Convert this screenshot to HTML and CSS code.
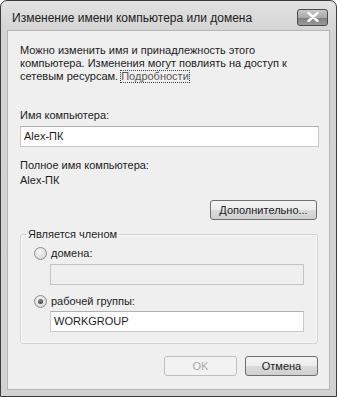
FILE: index.html
```html
<!DOCTYPE html>
<html lang="ru">
<head>
    <meta charset="UTF-8">
    <title>Изменение имени компьютера или домена</title>
    <link rel="stylesheet" href="styles.css">
</head>
<body>
    <div class="window">
        <div class="titlebar">
            <span class="title">Изменение имени компьютера или домена</span>
            <span class="close">
                <svg width="12" height="10" viewBox="0 0 12 10">
                    <path d="M1.5 1 L10.5 9 M10.5 1 L1.5 9" stroke="#fff" stroke-width="2.4" stroke-linecap="round"/>
                </svg>
            </span>
        </div>

        <div class="client">
            <p class="intro">Можно изменить имя и принадлежность этого компьютера. Изменения могут повлиять на доступ к сетевым ресурсам. <span class="link">Подробности</span></p>

            <div class="label first">Имя компьютера:</div>
            <div class="field">Alex-ПК</div>

            <div class="label">Полное имя компьютера:</div>
            <div class="value">Alex-ПК</div>

            <div class="more-row">
                <span class="button wide">Дополнительно...</span>
            </div>

            <fieldset class="group">
                <legend>Является членом</legend>
                <div class="option">
                    <span class="radio"></span> домена:
                </div>
                <div class="field disabled"></div>
                <div class="option">
                    <span class="radio checked"></span> рабочей группы:
                </div>
                <div class="field">WORKGROUP</div>
            </fieldset>

            <div class="actions">
                <span class="button off">OK</span>
                <span class="button">Отмена</span>
            </div>
        </div>
    </div>
</body>
</html>
```

FILE: styles.css
```css
body {
    margin: 0;
    background: #ffffff;
    font-family: 'Liberation Sans', Arial, sans-serif;
    font-size: 11px;
    color: #1c1c1c;
}

.window {
    width: 337px;
    height: 397px;
    box-sizing: border-box;
    border: 1px solid #3c3c3c;
    border-radius: 7px 7px 0 0;
    background: linear-gradient(#e2e2e2, #d4d4d4 30px, #d2d2d2);
    display: flex;
    flex-direction: column;
}

.titlebar {
    height: 29px;
    display: flex;
    align-items: center;
    padding: 0 8px 0 11px;
}

.title {
    flex: 1;
    font-size: 12px;
    color: #202020;
    padding-top: 4px;
}

.close {
    width: 31px;
    height: 17px;
    box-sizing: border-box;
    margin-top: 3px;
    border: 1px solid #4a4a4a;
    border-radius: 3px;
    background: linear-gradient(#c9c9c9, #a9a9a9 50%, #7e7e7e 51%, #9a9a9a);
    display: flex;
    align-items: center;
    justify-content: center;
}

.client {
    flex: 1;
    margin: 0 6px 6px;
    border: 1px solid #b5b5b5;
    background: #efefef;
    padding: 13px 10px 0 12px;
    line-height: 13px;
}

.intro {
    margin: 0;
}

/* focused link: dotted focus rectangle */
.link {
    display: inline-block;
    line-height: 11px;
    color: #5a5a5a;
    outline: 1px dotted #444;
}

.label {
    margin-top: 12px;
}

.label.first {
    margin-top: 26px;
}

.field {
    height: 21px;
    box-sizing: border-box;
    margin-top: 4px;
    padding: 3px 0 0 3px;
    border: 1px solid #c9c9c9;
    border-top-color: #b0b0b0;
    background: #ffffff;
}

.field.disabled {
    background: #efefef;
    border-color: #c4c4c4;
}

.value {
    margin-top: 2px;
}

.more-row {
    display: flex;
    justify-content: flex-end;
    margin-top: 13px;
    padding-right: 2px;
}

.button {
    width: 73px;
    height: 20px;
    box-sizing: border-box;
    display: flex;
    align-items: center;
    justify-content: center;
    border: 1px solid #6e6e6e;
    border-radius: 3px;
    background: linear-gradient(#f4f4f4, #ebebeb 50%, #dcdcdc 51%, #cfcfcf);
}

.button.wide {
    width: 107px;
}

.button.off {
    color: #a8a8a8;
    border-color: #bfbfbf;
    background: #f2f2f2;
}

.group {
    margin: 8px 1px 0 0;
    padding: 4px 13px 11px 13px;
    border: 1px solid #d2d2d2;
    border-radius: 3px;
    box-shadow: inset 0 0 0 1px #fafafa;
}

.group legend {
    padding: 0 2px;
    margin-left: -8px;
}

.option {
    display: flex;
    align-items: center;
    gap: 4px;
    margin-top: 2px;
}

.group .option + .field {
    margin-top: 4px;
    margin-left: 16px;
}

.group .field + .option {
    margin-top: 10px;
}

.group .field:last-child {
    margin-top: 3px;
}

.radio {
    width: 13px;
    height: 13px;
    box-sizing: border-box;
    border-radius: 50%;
    border: 1px solid #8c8c8c;
    background: radial-gradient(circle at 40% 35%, #f6f6f6, #cfcfcf);
    display: flex;
    align-items: center;
    justify-content: center;
}

.radio.checked::after {
    content: "";
    width: 5px;
    height: 5px;
    border-radius: 50%;
    background: radial-gradient(circle at 40% 35%, #8a8a8a, #2a2a2a);
}

.actions {
    display: flex;
    justify-content: flex-end;
    gap: 8px;
    margin-top: 12px;
    padding-right: 1px;
}
```
